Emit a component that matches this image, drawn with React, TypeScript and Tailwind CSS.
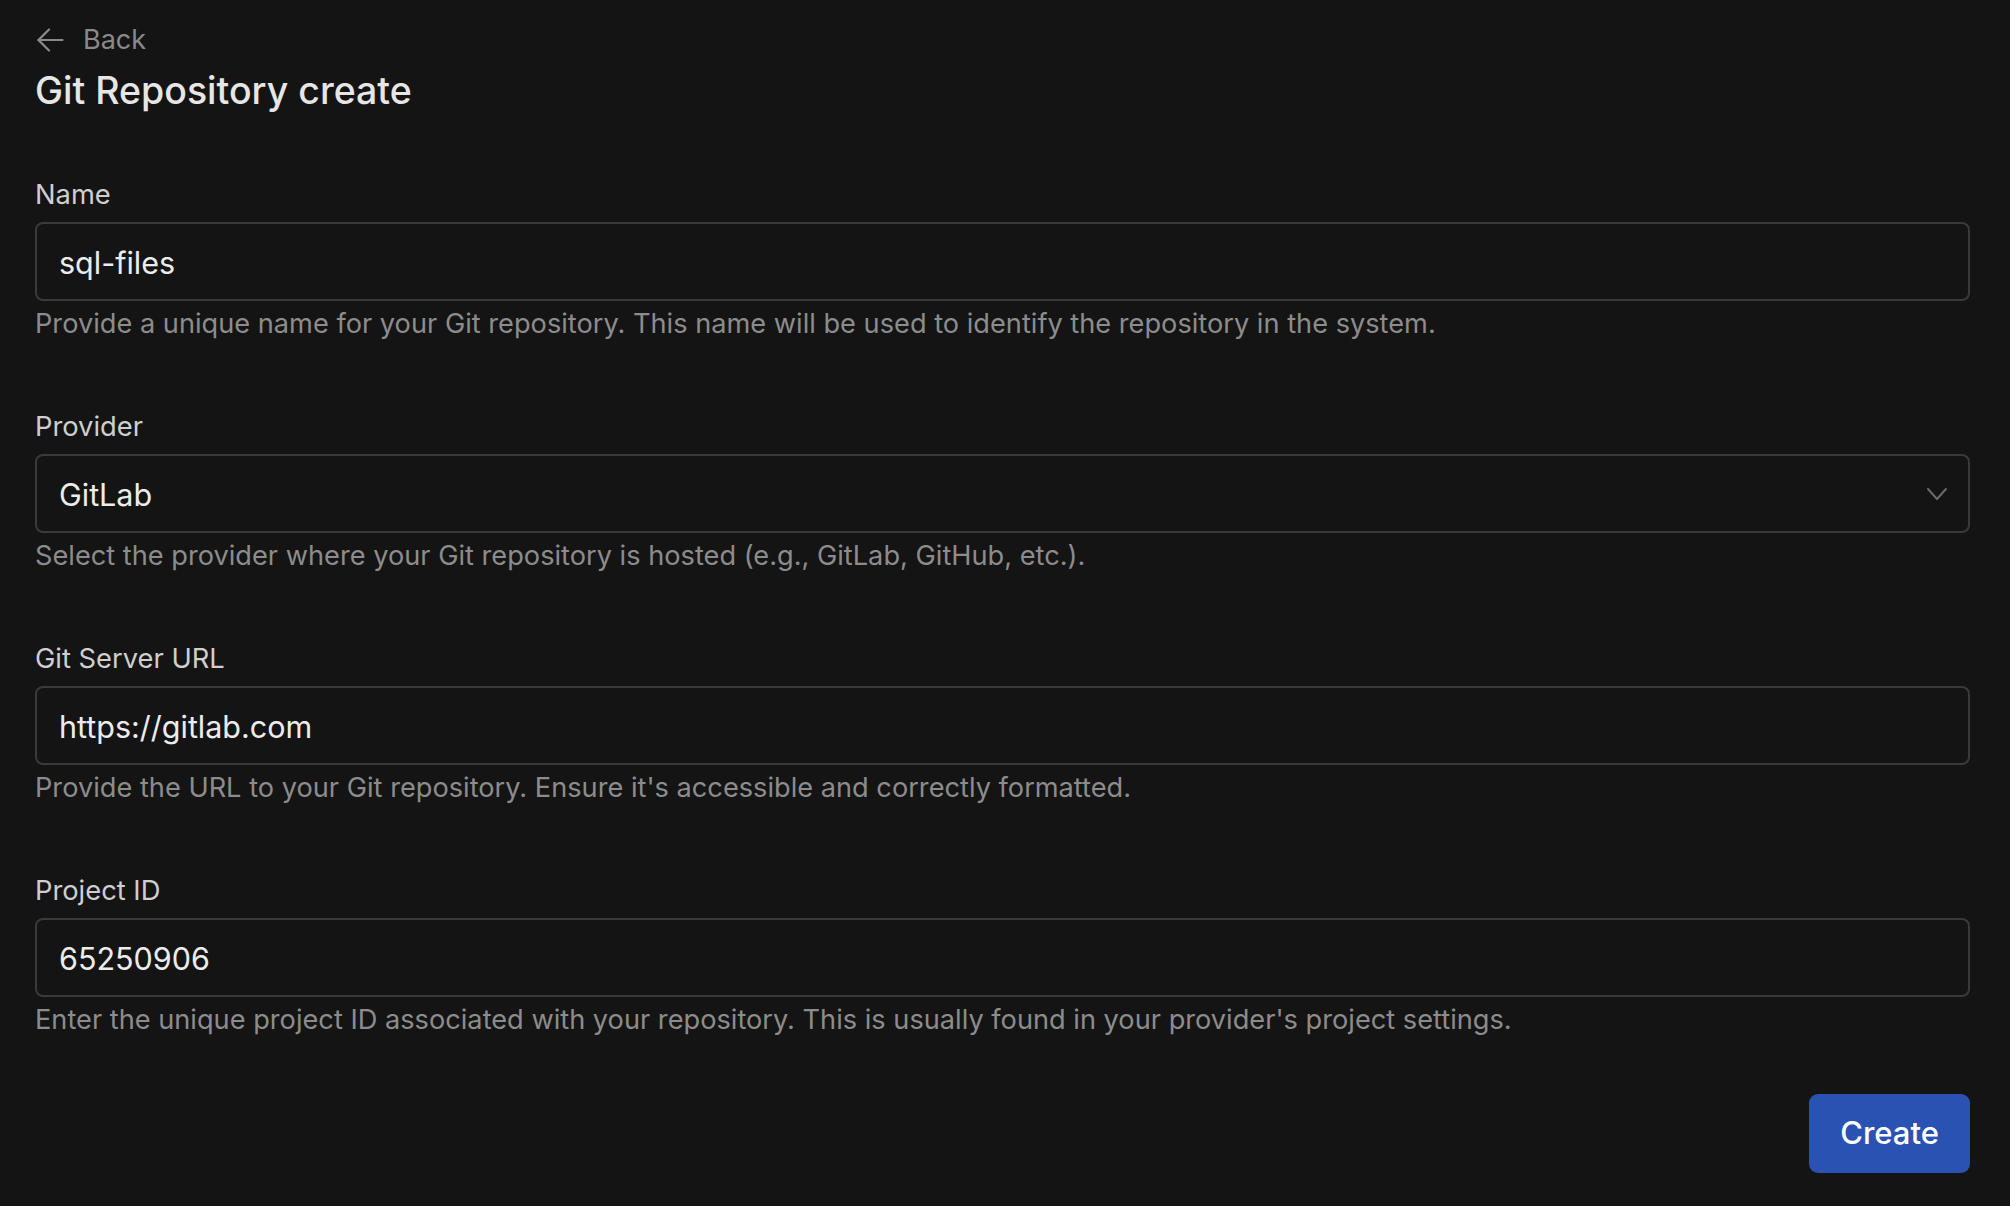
import React from "react";

function ArrowLeft() {
  return (
    <svg width="27" height="24" viewBox="0 0 27 24" fill="none" stroke="currentColor" strokeWidth="2.2" strokeLinecap="round" strokeLinejoin="round">
      <path d="M25.5 12H1.5" />
      <path d="M12 1.5L1.5 12 12 22.5" />
    </svg>
  );
}

function Chevron() {
  return (
    <svg width="22" height="16" viewBox="0 0 22 16" fill="none" stroke="currentColor" strokeWidth="2" strokeLinecap="round" strokeLinejoin="round">
      <path d="M2 3l9 10 9-10" />
    </svg>
  );
}

function Field({ label, value, help, select }: { label: string; value: string; help: string; select?: boolean }) {
  return (
    <div className="flex flex-col">
      <div className="text-[27.3px] leading-[32px] text-[#cfcfcf]">{label}</div>
      <div className="mt-[11px] h-[79px] rounded-[8px] border-2 border-[#3a3a3a] flex items-center pl-[22px] pr-[20px] justify-between">
        <span className="text-[30.5px] leading-[40px] pt-[2px] text-[#ececec]">{value}</span>
        {select && (
          <span className="text-[#6b6b6b]">
            <Chevron />
          </span>
        )}
      </div>
      <div className="mt-[5px] text-[27.2px] leading-[36px] text-[#8c8c8c]">{help}</div>
    </div>
  );
}

export default function App() {
  return (
    <div
      className="min-h-screen w-full bg-[#141414] pl-[35px] pr-[40px] pt-[22px] pb-[33px]"
      style={{ fontFamily: "Inter, 'Noto Sans', sans-serif" }}
    >
      <div className="flex items-center gap-[19px] h-[36px] text-[#8a8a8a]">
        <span className="pl-[2px] flex">
          <ArrowLeft />
        </span>
        <span className="text-[27px] leading-[36px]">Back</span>
      </div>
      <h1 className="mt-[9px] text-[37.5px] leading-[48px] font-medium text-[#e6e6e6]">Git Repository create</h1>
      <div className="mt-[64px] flex flex-col gap-[69px]">
        <Field
          label="Name"
          value="sql-files"
          help="Provide a unique name for your Git repository. This name will be used to identify the repository in the system."
        />
        <Field
          label="Provider"
          value="GitLab"
          select
          help="Select the provider where your Git repository is hosted (e.g., GitLab, GitHub, etc.)."
        />
        <Field
          label="Git Server URL"
          value="https://gitlab.com"
          help="Provide the URL to your Git repository. Ensure it's accessible and correctly formatted."
        />
        <Field
          label="Project ID"
          value="65250906"
          help="Enter the unique project ID associated with your repository. This is usually found in your provider's project settings."
        />
      </div>
      <div className="mt-[56px] flex justify-end">
        <button className="h-[79px] w-[161px] rounded-[9px] bg-[#2a52b3] text-white text-[31px] font-medium">
          Create
        </button>
      </div>
    </div>
  );
}
